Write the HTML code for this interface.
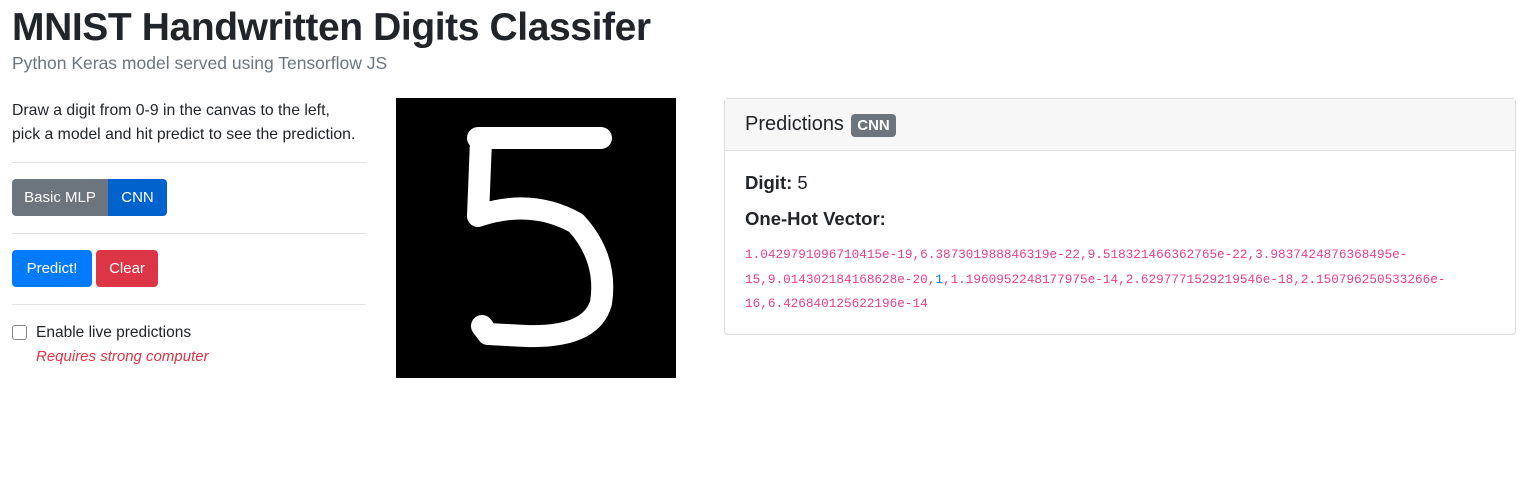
<!DOCTYPE html>
<html><head><meta charset="utf-8"><style>
body{margin:0;background:#fff;font-family:"Liberation Sans",sans-serif;color:#212529;width:1528px;height:492px;overflow:hidden;position:relative}
.a{position:absolute;white-space:nowrap}
hr{position:absolute;left:12px;width:354px;border:0;border-top:1px solid #e2e2e2;margin:0}
.btn{position:absolute;color:#fff;font-size:15px;line-height:37px;text-align:center;height:37px}
</style></head><body>
<div class="a" style="left:12px;top:6px;font-size:39px;font-weight:bold;letter-spacing:-0.4px;color:#212529">MNIST Handwritten Digits Classifer</div>
<div class="a" style="left:12px;top:53px;font-size:17.5px;color:#6c757d;font-weight:300">Python Keras model served using Tensorflow JS</div>
<div class="a" style="left:12px;top:99px;font-size:15.8px;line-height:24px">Draw a digit from 0-9 in the canvas to the left,<br>pick a model and hit predict to see the prediction.</div>
<hr style="top:162px"><hr style="top:233px"><hr style="top:304px">
<div class="btn" style="left:12px;top:179px;width:96px;background:#6c757d;border-radius:4px 0 0 4px">Basic MLP</div>
<div class="btn" style="left:108px;top:179px;width:59px;background:#0062cc;border-radius:0 4px 4px 0">CNN</div>
<div class="btn" style="left:12px;top:250px;width:80px;background:#007bff;border-radius:4px">Predict!</div>
<div class="btn" style="left:96px;top:250px;width:62px;background:#dc3545;border-radius:4px">Clear</div>
<div class="a" style="left:12px;top:325px;width:13px;height:13px;border:1px solid #888;border-radius:3px"></div>
<div class="a" style="left:36px;top:324px;font-size:15.5px">Enable live predictions</div>
<div class="a" style="left:36px;top:348px;font-size:15px;font-style:italic;color:#dc3545">Requires strong computer</div>
<svg class="a" style="left:396px;top:98px" width="280" height="280"><rect width="280" height="280" fill="#000"/>
<path d="M82 40 L205 40 M85 42 L82 118 Q135 100 180 125 Q212 160 205 205 Q195 240 130 238 L92 236 L86 228" fill="none" stroke="#fff" stroke-width="22" stroke-linecap="round" stroke-linejoin="round"/></svg>
<div class="a" style="left:724px;top:98px;width:790px;height:235px;border:1px solid #ddd;border-radius:4px">
<div style="height:51px;background:#f7f7f7;border-bottom:1px solid #ddd"></div></div>
<div class="a" style="left:745px;top:113px;font-size:20px;font-weight:500">Predictions</div>
<div class="a" style="left:851px;top:114px;width:45px;height:23px;background:#6c757d;border-radius:4px;color:#fff;font-weight:bold;font-size:15px;line-height:23px;text-align:center">CNN</div>
<div class="a" style="left:745px;top:172px;font-size:18.5px"><b>Digit:</b> 5</div>
<div class="a" style="left:745px;top:208px;font-size:18.5px;font-weight:bold">One-Hot Vector:</div>
<div class="a" style="left:745px;top:243px;font-family:'Liberation Mono',monospace;font-size:12.7px;line-height:24.5px;color:#e83e8c">1.0429791096710415e-19,6.387301988846319e-22,9.518321466362765e-22,3.9837424876368495e-<br>15,9.014302184168628e-20,<span style="color:#007bff">1</span>,1.1960952248177975e-14,2.6297771529219546e-18,2.150796250533266e-<br>16,6.426840125622196e-14</div>
</body></html>
